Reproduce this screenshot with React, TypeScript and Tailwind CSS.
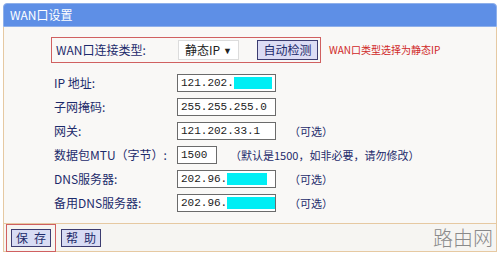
import React from 'react';

const cjk = "font-['Noto_Sans_CJK_SC','Noto_Sans',sans-serif]";
const mono = "font-['Liberation_Mono','Noto_Sans_CJK_SC',monospace]";

type Row = {
    label: string;
    value: string;
    width: string;
    mask?: string;
    note?: string;
};

const rows: Row[] = [
    { label: 'IP  地址:', value: '121.202.', width: 'w-[99px]', mask: 'w-[38px]' },
    { label: '子网掩码:', value: '255.255.255.0', width: 'w-[99px]' },
    { label: '网关:', value: '121.202.33.1', width: 'w-[99px]', note: '（可选）' },
    { label: '数据包MTU（字节）:', value: '1500', width: 'w-[40px]', note: '（默认是1500，如非必要，请勿修改）' },
    { label: 'DNS服务器:', value: '202.96.', width: 'w-[99px]', mask: 'w-[40px]', note: '（可选）' },
    { label: '备用DNS服务器:', value: '202.96.', width: 'w-[99px]', mask: 'w-[53px]', note: '（可选）' },
];

function Field({ row }: { row: Row }) {
    return (
        <div className="flex items-center h-[24px]">
            <div className={`w-[123px] text-[12px] leading-none text-[#1d2b6b] ${cjk}`}>
                {row.label}
            </div>
            <div
                className={`${row.width} h-[18px] bg-white border border-[#6b6b6b] flex items-center pl-[3px] overflow-hidden`}
            >
                <span className={`text-[11px] leading-none text-[#222] ${mono}`}>{row.value}</span>
                {row.mask && <span className={`${row.mask} h-[12px] bg-[#00eef4]`} />}
            </div>
            {row.note && (
                <span className={`ml-[13px] text-[11px] leading-none text-[#1d2b6b] ${cjk}`}>
                    {row.note}
                </span>
            )}
        </div>
    );
}

export default function App() {
    return (
        <div className="w-[500px] h-[253px] bg-white px-[3px] pt-[3px] flex flex-col">
            {/* Title bar */}
            <div className="h-[24px] rounded-t-[4px] bg-[#5e8fe6] border border-[#8fb0ea] flex items-center pl-[6px]">
                <span className={`text-[12px] leading-none text-white ${cjk}`}>WAN口设置</span>
            </div>

            {/* Body */}
            <div className="h-[196px] bg-[#f9f8f6] border-x border-[#e6c9a2] pl-[47px] pt-[10px]">
                <div className="flex items-center">
                    <div className="w-[270px] h-[26px] border border-[#d06060] flex items-center pl-[4px]">
                        <div className={`w-[122px] text-[12px] leading-none text-[#1d2b6b] ${cjk}`}>
                            WAN口连接类型:
                        </div>
                        <div className="w-[61px] h-[20px] bg-white border border-[#dcdcdc] flex items-center justify-between px-[6px]">
                            <span className={`text-[12px] leading-none text-[#222] ${cjk}`}>静态IP</span>
                            <span className="text-[9px] leading-none text-[#222]">▼</span>
                        </div>
                        <div
                            className={`ml-[18px] w-[61px] h-[20px] bg-[#dcdcf4] border border-[#3c3c70] flex items-center justify-center text-[12px] leading-none text-[#1d2b6b] ${cjk}`}
                        >
                            自动检测
                        </div>
                    </div>
                    <span className={`ml-[8px] text-[10px] leading-none text-[#d02828] ${cjk}`}>
                        WAN口类型选择为静态IP
                    </span>
                </div>
                <div className="mt-[8px] pl-[3px] flex flex-col">
                    {rows.map((row) => (
                        <Field key={row.label} row={row} />
                    ))}
                </div>
            </div>

            {/* Footer */}
            <div className="h-[29px] bg-[#f6f5f2] border border-[#e6c9a2] flex items-center pl-[2px] pr-[3px]">
                <div className="border border-[#d06060] p-[4px]">
                    <div
                        className={`w-[40px] h-[18px] bg-[#d8dcf4] border border-[#3c3c70] flex items-center justify-center gap-[6px] text-[12px] leading-none text-[#1d2b6b] ${cjk}`}
                    >
                        <span>保</span>
                        <span>存</span>
                    </div>
                </div>
                <div
                    className={`ml-[5px] w-[40px] h-[18px] bg-[#d8dcf4] border border-[#3c3c70] flex items-center justify-center gap-[6px] text-[12px] leading-none text-[#1d2b6b] ${cjk}`}
                >
                    <span>帮</span>
                    <span>助</span>
                </div>
                <span className={`ml-auto text-[20px] leading-none text-[#8a8a8a] font-light ${cjk}`}>
                    路由网
                </span>
            </div>
        </div>
    );
}
